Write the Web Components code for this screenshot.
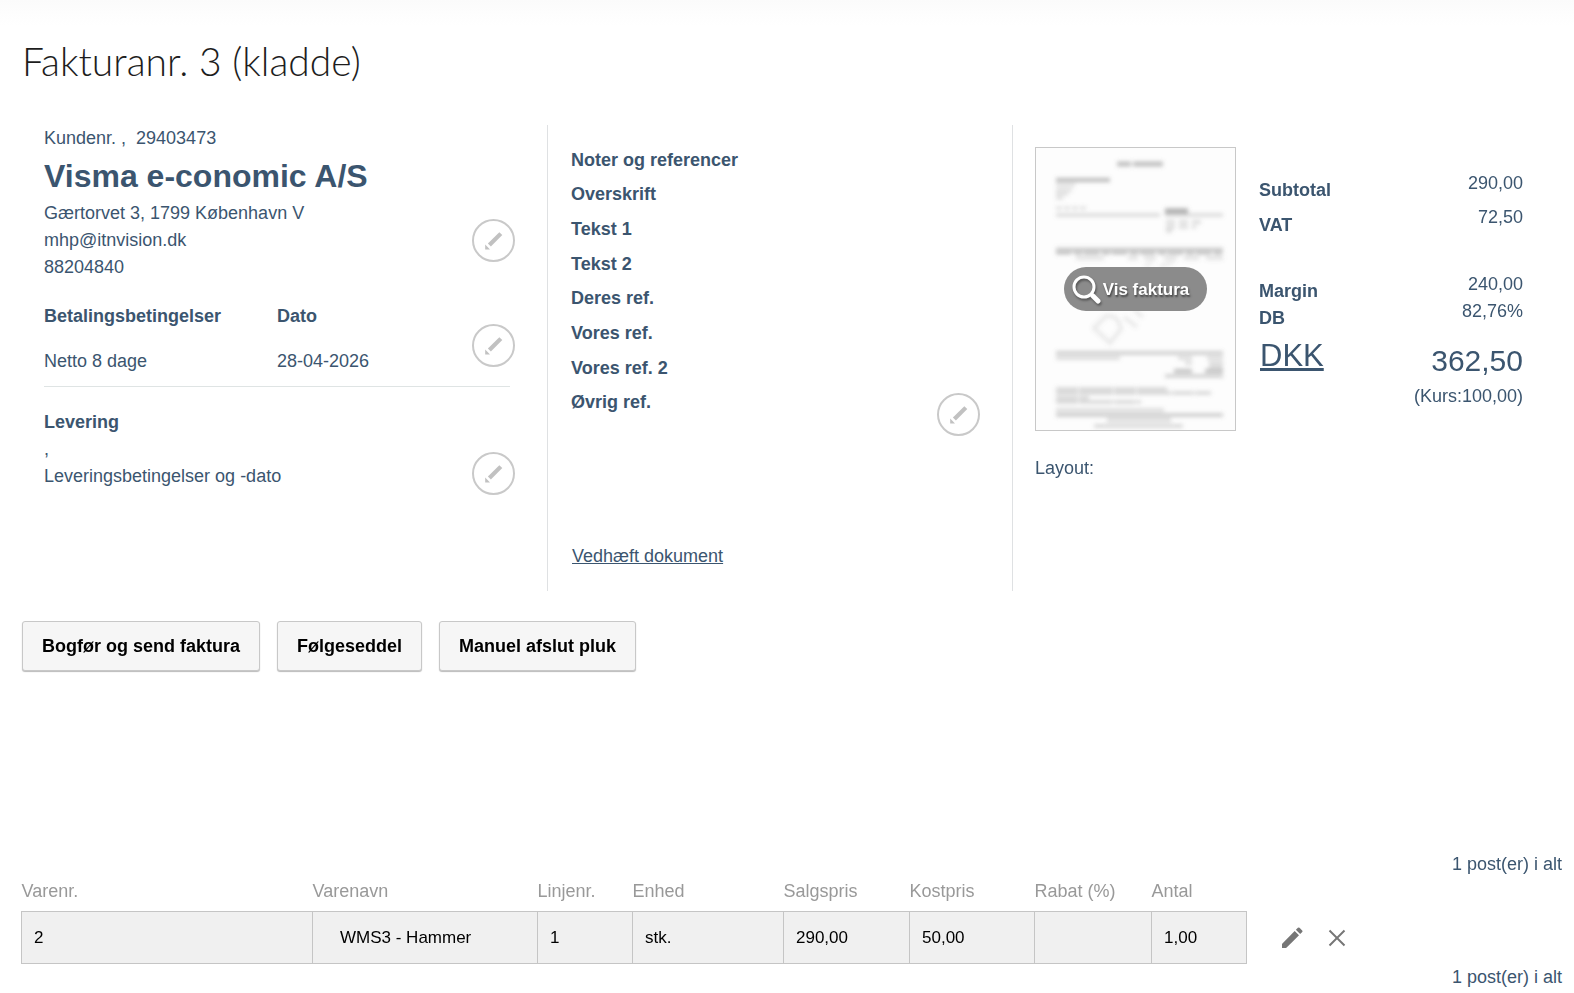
<!DOCTYPE html>
<html lang="da">
<head>
<meta charset="utf-8">
<title>Fakturanr. 3 (kladde)</title>
<style>
body {
  margin: 0;
  background: #fff;
  color: #3b556f;
  font: 18px/27px "Liberation Sans", Arial, sans-serif;
}
</style>
</head>
<body>
<invoice-page></invoice-page>

<script>
const makeTemplate = (html) => {
  const template = document.createElement("template");
  template.innerHTML = html;
  return template;
};

class BaseElement extends HTMLElement {
  constructor() {
    super();
    this.attachShadow({ mode: "open" });
    this.shadowRoot.appendChild(this.constructor.template.content.cloneNode(true));
  }
}

// Round pencil button
class EditButton extends BaseElement {
  static template = makeTemplate(`
<style>
:host {
  display: block;
  flex: none;
}
button {
  display: grid;
  place-items: center;
  width: 43px;
  height: 43px;
  padding: 0;
  border: 2px solid #c9c9c9;
  border-radius: 50%;
  background: #fff;
  color: #c1c1c1;
  cursor: pointer;
}
</style>
<button type="button" aria-label="Rediger">
  <svg width="19" height="19" viewBox="0 0 19 19" fill="currentColor">
    <path d="M15.3 1.2 18.3 4.1 6.9 15.4 3.9 12.4z"/>
    <path d="M1.2 13.6 6 18.4H1.2z"/>
  </svg>
</button>
`);
}

// Block of content with an edit button on the right
class EditSection extends BaseElement {
  static template = makeTemplate(`
<style>
:host {
  display: flex;
  align-items: flex-end;
}
.content {
  flex: 1;
  min-width: 0;
}
edit-button {
  margin: var(--edit-margin, 0 -5px 0 0);
}
</style>
<div class="content"><slot></slot></div>
<edit-button></edit-button>
`);
}

class CustomerPanel extends BaseElement {
  static template = makeTemplate(`
<style>
:host {
  display: block;
  box-sizing: border-box;
  padding: 0 37px 0 22px;
}
h2 {
  margin: 0;
  font-size: 32px;
  line-height: 48px;
}
h3 {
  margin: 0;
  font-size: 18px;
}
p {
  margin: 0;
}
.customer {
  --edit-margin: 0 -5px 19px 0;
}
.terms {
  margin-top: 22px;
  padding-bottom: 11px;
  border-bottom: 1px solid #dfe4e4;
  --edit-margin: 0 -5px 8px 0;
}
.terms-grid {
  display: grid;
  grid-template-columns: 1fr 1fr;
  column-gap: 38px;
  row-gap: 18px;
}
.delivery {
  margin-top: 21px;
  --edit-margin: 0 -5px -5px 0;
}
.delivery h3 {
  padding-top: 1px;
}
</style>
<edit-section class="customer">
  <p>Kundenr. , &nbsp;29403473</p>
  <h2>Visma e-conomic A/S</h2>
  <p>Gærtorvet 3, 1799 København V</p>
  <p>mhp@itnvision.dk</p>
  <p>88204840</p>
</edit-section>
<edit-section class="terms">
  <div class="terms-grid">
    <h3>Betalingsbetingelser</h3>
    <h3>Dato</h3>
    <p>Netto 8 dage</p>
    <p>28-04-2026</p>
  </div>
</edit-section>
<edit-section class="delivery">
  <h3>Levering</h3>
  <p>,</p>
  <p>Leveringsbetingelser og -dato</p>
</edit-section>
`);
}

class ReferencePanel extends BaseElement {
  static template = makeTemplate(`
<style>
:host {
  display: flex;
  flex-direction: column;
  box-sizing: border-box;
  padding: 18px 32px 21px 23px;
  border: solid #dfe1e3;
  border-width: 0 1px;
}
edit-section {
  --edit-margin: 0 0 -16px 0;
}
ul {
  display: grid;
  grid-auto-rows: 1fr;
  align-items: center;
  min-height: 277px;
  margin: 0;
  padding: 0;
  list-style: none;
  font-weight: bold;
}
a {
  align-self: flex-start;
  margin: auto 0 0 1px;
  color: inherit;
}
</style>
<edit-section>
  <ul></ul>
</edit-section>
<a href="#">Vedhæft dokument</a>
`);

  constructor() {
    super();
    const labels = ["Noter og referencer", "Overskrift", "Tekst 1", "Tekst 2", "Deres ref.", "Vores ref.", "Vores ref. 2", "Øvrig ref."];
    const list = this.shadowRoot.querySelector("ul");
    labels.forEach((label) => {
      const li = document.createElement("li");
      li.textContent = label;
      list.appendChild(li);
    });
  }
}

// Blurred thumbnail of the printed invoice
class InvoicePreview extends BaseElement {
  static template = makeTemplate(`
<style>
:host {
  display: grid;
  place-items: center;
  flex: none;
  border: 1px solid #c8c8c8;
  background: #fdfdfd;
}
.paper, button {
  grid-area: 1 / 1;
}
.paper {
  display: block;
}
button {
  display: flex;
  align-items: center;
  gap: 1px;
  height: 44px;
  padding: 0 18px 0 8px;
  border: 0;
  border-radius: 22px;
  background: #8b8b8b;
  color: #fff;
  font: bold 17px/27px "Liberation Sans", Arial, sans-serif;
  text-shadow: 1px 2px 2px #444;
  cursor: pointer;
}
button svg {
  filter: drop-shadow(1px 2px 1px #555);
}
</style>
<svg class="paper" width="199" height="282" viewBox="0 0 199 282" fill="none" stroke="#777" aria-hidden="true">
  <defs><filter id="soft" x="-5%" y="-5%" width="110%" height="110%"><feGaussianBlur stdDeviation="2"/></filter></defs>
  <g filter="url(#soft)">
    <path d="M81 16h14M97 16h30" stroke-width="5" opacity=".45"/>
    <path d="M20 32h54" stroke-width="4" opacity=".5"/>
    <path d="M20 37h19M20 42h16M20 46h12M20 50h7" stroke-width="3" opacity=".25"/>
    <path d="M20 60h30" stroke-width="3" stroke-dasharray="6 2" opacity=".25"/>
    <path d="M20 67h104M129 67h58" stroke-width="3" opacity=".3"/>
    <path d="M129 63h23" stroke-width="5" opacity=".6"/>
    <path d="M130 74h36M130 79h30M130 83h6" stroke-width="3" stroke-dasharray="9 4" opacity=".3"/>
    <path d="M20 102h167" stroke-width="5" opacity=".33"/>
    <path d="M20 105h167" stroke-width="4" stroke-dasharray="15 3 8 2" opacity=".3"/>
    <path d="M40 110h28M92 110h10M108 110h12M128 110h13M148 110h15M170 110h17" stroke-width="4" opacity=".2"/>
    <path d="M109 118l8-4M124 118l14-4" stroke-width="3" opacity=".15"/>
    <path d="M58 180 74 195 85 181Q82 166 70 168ZM88 169l13 10M98 162l9 7" stroke-width="4" opacity=".15"/>
    <path d="M20 205h167" stroke-width="4" opacity=".33"/>
    <path d="M20 210h64M142 210h14M171 210h16M149 215h7M173 215h14M173 219h14" stroke-width="3" opacity=".3"/>
    <path d="M138 223h18M169 223h18" stroke-width="4" opacity=".45"/>
    <path d="M129 228h58" stroke-width="3" opacity=".4"/>
    <path d="M20 241h111M20 245h155M20 250h33M20 254h85" stroke-width="3" stroke-dasharray="22 1 34 1" opacity=".35"/>
    <path d="M20 262h108" stroke-width="3" opacity=".3"/>
    <path d="M20 267h167" stroke-width="3" opacity=".45"/>
    <path d="M71 272h64M58 278h89" stroke-width="4" opacity=".26"/>
  </g>
</svg>
<button type="button">
  <svg width="30" height="30" viewBox="0 0 30 30" fill="none" stroke="#fff">
    <circle cx="12" cy="13" r="10" stroke-width="3"/>
    <path d="M19 20l2 2" stroke-width="3"/>
    <path d="M21 22l5 5" stroke-width="5" stroke-linecap="round"/>
  </svg>
  Vis faktura
</button>
`);
}

class InvoiceTotals extends BaseElement {
  static template = makeTemplate(`
<style>
:host {
  display: flex;
  justify-content: space-between;
  flex: 1;
}
.labels, .values {
  display: flex;
  flex-direction: column;
}
.labels {
  align-items: flex-start;
  padding-top: 7px;
  font-weight: bold;
}
.values {
  text-align: right;
}
.row {
  margin-bottom: 8px;
}
.space {
  margin-bottom: 39px;
}
.values .row {
  margin-bottom: 7px;
}
.values .space {
  margin-bottom: 40px;
}
a {
  margin-left: 1px;
  color: inherit;
  font-size: 31px;
  line-height: 47px;
  font-weight: normal;
}
.total {
  margin-top: 14px;
  font-size: 30px;
  line-height: 44px;
}
</style>
<div class="labels">
  <span class="row">Subtotal</span>
  <span class="space">VAT</span>
  <span>Margin</span>
  <span>DB</span>
  <a href="#">DKK</a>
</div>
<div class="values">
  <span class="row">290,00</span>
  <span class="space">72,50</span>
  <span>240,00</span>
  <span>82,76%</span>
  <span class="total">362,50</span>
  <span>(Kurs:100,00)</span>
</div>
`);
}

class SummaryPanel extends BaseElement {
  static template = makeTemplate(`
<style>
:host {
  display: block;
  box-sizing: border-box;
  padding: 22px 29px 0 22px;
}
.top {
  display: flex;
  align-items: flex-start;
  gap: 23px;
}
invoice-totals {
  margin-top: 23px;
}
p {
  margin: 24px 0 0;
}
</style>
<div class="top">
  <invoice-preview></invoice-preview>
  <invoice-totals></invoice-totals>
</div>
<p>Layout:</p>
`);
}

class ActionButton extends BaseElement {
  static template = makeTemplate(`
<style>
:host {
  display: block;
}
button {
  height: 50px;
  padding: 0 19px;
  border: 1px solid #c8c8c8;
  border-radius: 3px;
  background: #f6f6f6;
  box-shadow: 0 1px 1px #bbb;
  color: #000;
  font: bold 18px "Liberation Sans", Arial, sans-serif;
  cursor: pointer;
}
</style>
<button type="button"><slot></slot></button>
`);
}

class InvoiceLines extends BaseElement {
  static template = makeTemplate(`
<style>
:host {
  display: block;
}
.count {
  margin: 0;
  text-align: right;
}
table {
  width: 100%;
  table-layout: fixed;
  border-collapse: collapse;
}
th {
  padding: 0 0 6px;
  color: #999;
  font-weight: normal;
  text-align: left;
}
td {
  box-sizing: border-box;
  height: 52px;
  padding: 0 12px;
  border: 1px solid #c5c5c5;
  background: #f0f0f0;
  color: #000;
  font-size: 17px;
}
td.name {
  padding-left: 27px;
}
td.actions {
  padding: 0 0 0 34px;
  border: 0;
  background: none;
}
.icons {
  display: flex;
  align-items: center;
  gap: 25px;
}
.icons button {
  display: block;
  padding: 0;
  border: 0;
  background: none;
  color: #767676;
  cursor: pointer;
}
.icons svg {
  display: block;
}
</style>
<p class="count">1 post(er) i alt</p>
<table>
  <colgroup>
    <col style="width: 291px"><col style="width: 225px"><col style="width: 95px"><col style="width: 151px">
    <col style="width: 126px"><col style="width: 125px"><col style="width: 117px"><col style="width: 95px"><col>
  </colgroup>
  <thead>
    <tr><th>Varenr.</th><th>Varenavn</th><th>Linjenr.</th><th>Enhed</th><th>Salgspris</th><th>Kostpris</th><th>Rabat (%)</th><th>Antal</th></tr>
  </thead>
  <tbody>
    <tr>
      <td>2</td><td class="name">WMS3 - Hammer</td><td>1</td><td>stk.</td><td>290,00</td><td>50,00</td><td></td><td>1,00</td>
      <td class="actions">
        <div class="icons">
          <button type="button" aria-label="Rediger linje">
            <svg width="22" height="22" viewBox="0 0 22 22" fill="currentColor">
              <path d="M13.7 4 18 8.3 5.4 20.7Q5 21 4.4 21H1V17.3Q1 16.8 1.4 16.4z"/>
              <path d="M14.9 2.8 16.9 .8Q17.7 .2 18.5 .8L21.2 3.5Q21.8 4.3 21.2 5.1L19.2 7.1z"/>
            </svg>
          </button>
          <button type="button" aria-label="Slet linje">
            <svg width="18" height="18" viewBox="0 0 18 18" fill="none" stroke="currentColor" stroke-width="2">
              <path d="M1.5 1.5l15 15M16.5 1.5l-15 15"/>
            </svg>
          </button>
        </div>
      </td>
    </tr>
  </tbody>
</table>
<p class="count">1 post(er) i alt</p>
`);
}

class InvoicePage extends BaseElement {
  static template = makeTemplate(`
<style>
:host {
  display: block;
  padding: 36px 0 0;
  background: linear-gradient(#fbfbfb, #fff 26px);
}
h1 {
  margin: 0 22px;
  color: #1d1d1d;
  font: 300 39px/50px Lato, "Open Sans", sans-serif;
}
.panels {
  display: grid;
  grid-template-columns: 525fr 466fr 539fr;
  min-height: 466px;
  margin: 39px 22px 0;
}
.buttons {
  display: flex;
  gap: 17px;
  margin: 30px 22px 0;
}
invoice-lines {
  margin: 180px 12px 0 21px;
}
</style>
<h1>Fakturanr. 3 (kladde)</h1>
<div class="panels">
  <customer-panel></customer-panel>
  <reference-panel></reference-panel>
  <summary-panel></summary-panel>
</div>
<div class="buttons">
  <action-button>Bogfør og send faktura</action-button>
  <action-button>Følgeseddel</action-button>
  <action-button>Manuel afslut pluk</action-button>
</div>
<invoice-lines></invoice-lines>
`);
}

customElements.define("edit-button", EditButton);
customElements.define("edit-section", EditSection);
customElements.define("customer-panel", CustomerPanel);
customElements.define("reference-panel", ReferencePanel);
customElements.define("invoice-preview", InvoicePreview);
customElements.define("invoice-totals", InvoiceTotals);
customElements.define("summary-panel", SummaryPanel);
customElements.define("action-button", ActionButton);
customElements.define("invoice-lines", InvoiceLines);
customElements.define("invoice-page", InvoicePage);
</script>
</body>
</html>
